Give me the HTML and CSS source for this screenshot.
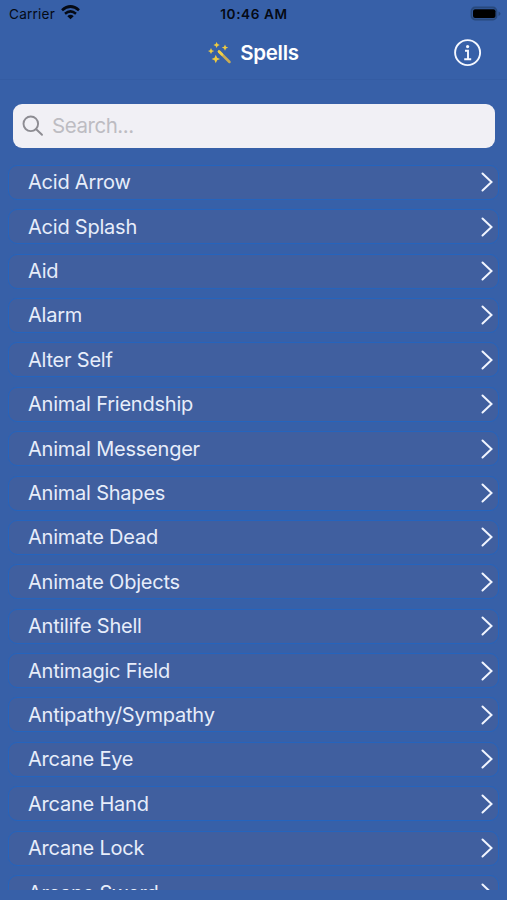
FILE: index.html
```html
<!DOCTYPE html>
<html lang="en">
<head>
<meta charset="utf-8">
<title>Spells</title>
<link rel="stylesheet" href="styles.css">
</head>
<body>
<div class="screen">
  <header class="header">
    <div class="status">
      <div class="carrier">
        <span>Carrier</span>
        <svg class="wifi" viewBox="0 0 19 15" width="19" height="15"><path d="M1 5.200Q9.500-2.200 18 5.200" fill="none" stroke="#050a14" stroke-width="2.700"/><path d="M4 8.700Q9.500 4 15 8.700" fill="none" stroke="#050a14" stroke-width="2.500"/><path d="M6.300 11.200Q9.500 8.400 12.700 11.200L9.500 14.300Z" fill="#050a14"/></svg>
      </div>
      <span class="time">10:46 AM</span>
      <svg class="battery" viewBox="0 0 32 16" width="32" height="16"><rect x="1.500" y="1.500" width="25" height="12" rx="3.500" fill="none" stroke="#28497d" stroke-width="1.800"/><rect x="3" y="3.200" width="22.500" height="8.800" rx="2" fill="#000"/><path d="M28.500 5.500q2 .8 2 2.300t-2 2.300z" fill="#28497d"/></svg>
    </div>
    <div class="nav">
      <div class="brand">
        <svg class="wand" viewBox="0 0 24 22" width="24" height="22"><path d="M11 9.500 21.500 20" stroke="#c9ac55" stroke-width="2.500" stroke-linecap="round"/><path d="m11 9.500 3 3" stroke="#efcf48" stroke-width="2.500" stroke-linecap="round"/><g fill="#efcb3f"><path d="m8.600 0 1 2.100 2.200.9-2.200.9-1 2.200-1-2.200L5.400 3l2.200-.9z"/><path d="m17 2.500 1 2.200 2.200.9-2.200.9-1 2.200-1-2.200-2.200-.9 2.200-.9z"/><path d="m3 6 1 2.200 2.200.8-2.200.9-1 2.200-1-2.200L-.2 9 2 8.200z"/><path d="m7.800 12.700 1.300 3 3 1.300-3 1.300-1.300 3-1.300-3-3-1.300 3-1.300z"/></g></svg>
        <h1 class="title">Spells</h1>
      </div>
      <svg class="info" viewBox="0 0 28 28" width="28" height="28" fill="none" stroke="#f5f8ff" stroke-width="1.900"><circle cx="13.600" cy="13.600" r="12.500"/><path d="M11 11.800h3v8.500M10.200 20.300h7" stroke-width="1.900"/><circle cx="13.600" cy="7.600" r="1.600" fill="#f5f8ff" stroke="none"/></svg>
    </div>
  </header>
  <main class="content">
    <div class="search">
      <svg viewBox="0 0 22 22" width="22" height="22" fill="none" stroke="#8d8c92" stroke-width="1.900" stroke-linecap="round"><circle cx="8.800" cy="8.800" r="7.300"/><path d="m14.200 14.200 5.800 5.600"/></svg>
      <span>Search...</span>
    </div>
    <div class="list" id="list"></div>
  </main>
</div>
<script src="script.js"></script>
</body>
</html>
```
FILE: styles.css
```css
* { box-sizing: border-box; }
body { margin: 0; background: #3760a8; font-family: Inter, "Liberation Sans", sans-serif; }
.screen { height: 900px; padding-bottom: 10px; display: flex; flex-direction: column; overflow: hidden; }
.header { height: 80px; flex: none; border-bottom: 1px solid #345ca3; }
.status { height: 27px; display: grid; grid-template-columns: 1fr auto 1fr; align-items: center; padding: 0 6px 0 9px; color: #050a14; }
.carrier { display: flex; align-items: center; gap: 6px; font-size: 13.6px; letter-spacing: .2px; }
.wifi { margin-top: -2px; }
.time { font-weight: 600; font-size: 13.6px; letter-spacing: .6px; margin-left: -2px; }
.battery { justify-self: end; margin-right: -1px; }
.nav { height: 52px; display: grid; grid-template-columns: 1fr auto 1fr; align-items: center; padding-right: 25px; }
.brand { grid-column: 2; display: flex; align-items: center; gap: 8px; margin-left: 25px; }
.title { margin: -2px 0 0; color: #fff; font-size: 20.5px; font-weight: 600; letter-spacing: -.25px; }
.info { justify-self: end; }
.content { flex: 1; min-height: 0; overflow: hidden; padding: 23.6px 8px 0; }
.search { height: 44px; margin: 0 4px 0 5px; padding-left: 9px; display: flex; align-items: center; gap: 8px; border-radius: 9px; background: #f1f0f5; color: #bdbcc2; font-size: 20.5px; letter-spacing: -.45px; }
.search span { margin-top: -1px; }
.list { display: flex; flex-direction: column; gap: 9.4px; padding-top: 17.2px; }
.row { flex: none; height: 35px; display: flex; align-items: center; justify-content: space-between; padding: 0 5px 0 19px; border: 1px solid #2564bd; border-radius: 9px; background: #405f9f; color: #e7edfa; font-size: 20px; letter-spacing: -.22px; }
```
FILE: script.js
```js
const spells = ["Acid Arrow", "Acid Splash", "Aid", "Alarm", "Alter Self", "Animal Friendship", "Animal Messenger", "Animal Shapes", "Animate Dead", "Animate Objects", "Antilife Shell", "Antimagic Field", "Antipathy/Sympathy", "Arcane Eye", "Arcane Hand", "Arcane Lock", "Arcane Sword"];
document.getElementById("list").innerHTML = spells.map(name => `
  <div class="row"><span>${name}</span>
    <svg viewBox="0 0 12 20" width="12" height="20" fill="none" stroke="#f1f5ff" stroke-width="2" stroke-linecap="round"><path d="m1.500 1.500 9 8.500-9 8.500"/></svg>
  </div>`).join("");
```
